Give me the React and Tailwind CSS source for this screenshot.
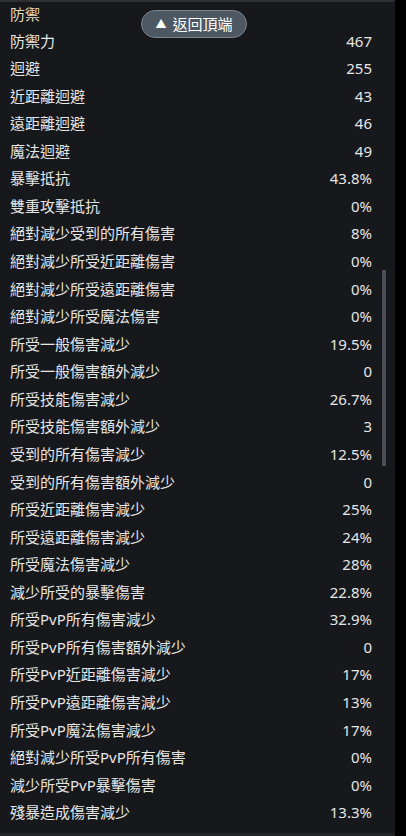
const rows = [
  ['防禦力', '467'],
  ['迴避', '255'],
  ['近距離迴避', '43'],
  ['遠距離迴避', '46'],
  ['魔法迴避', '49'],
  ['暴擊抵抗', '43.8%'],
  ['雙重攻擊抵抗', '0%'],
  ['絕對減少受到的所有傷害', '8%'],
  ['絕對減少所受近距離傷害', '0%'],
  ['絕對減少所受遠距離傷害', '0%'],
  ['絕對減少所受魔法傷害', '0%'],
  ['所受一般傷害減少', '19.5%'],
  ['所受一般傷害額外減少', '0'],
  ['所受技能傷害減少', '26.7%'],
  ['所受技能傷害額外減少', '3'],
  ['受到的所有傷害減少', '12.5%'],
  ['受到的所有傷害額外減少', '0'],
  ['所受近距離傷害減少', '25%'],
  ['所受遠距離傷害減少', '24%'],
  ['所受魔法傷害減少', '28%'],
  ['減少所受的暴擊傷害', '22.8%'],
  ['所受PvP所有傷害減少', '32.9%'],
  ['所受PvP所有傷害額外減少', '0'],
  ['所受PvP近距離傷害減少', '17%'],
  ['所受PvP遠距離傷害減少', '13%'],
  ['所受PvP魔法傷害減少', '17%'],
  ['絕對減少所受PvP所有傷害', '0%'],
  ['減少所受PvP暴擊傷害', '0%'],
  ['殘暴造成傷害減少', '13.3%'],
]

export default function App() {
  return (
    <div
      className="flex h-[836px] w-[406px] overflow-hidden bg-black"
      style={{ fontFamily: '"Noto Sans", "Noto Sans CJK TC", sans-serif' }}
    >
      <div className="relative flex w-[395px] flex-col border-t-[2px] border-b-[3px] border-t-[#2c2f33] border-b-[#222528] bg-[#16181b]">
        <div className="flex h-[25px] items-center pl-[10px] text-[15px] text-[#e3d9bd]">防禦</div>
        {rows.map(([label, value]) => (
          <div key={label} className="flex h-[27.57px] shrink-0 items-center justify-between pl-[10px] pr-[23px] text-[15px] text-[#e6e6e6]">
            <span>{label}</span>
            <span>{value}</span>
          </div>
        ))}

        <button className="absolute left-[141px] top-[8px] flex h-[28px] w-[106px] items-center justify-center gap-[6px] rounded-full border border-[#7b858f] bg-[#4d5863] text-[15px] text-white">
          <span className="text-[11px]">▲</span>
          <span>返回頂端</span>
        </button>

        <div className="absolute left-[382px] top-[268px] h-[196px] w-[4px] bg-[#4a4e54]" />
      </div>
    </div>
  )
}
